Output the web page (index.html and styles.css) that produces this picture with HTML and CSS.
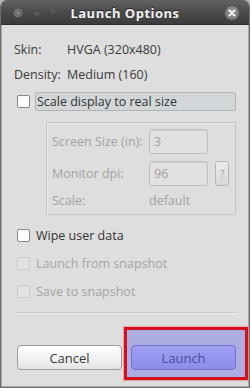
FILE: index.html
```html
<!DOCTYPE html>
<html>
<head>
<meta charset="utf-8">
<link rel="stylesheet" href="styles.css">
</head>
<body>
<div class="window">
  <div class="titlebar">
    <div class="tb-icons">
      <svg width="60" height="25" viewBox="0 0 60 25">
        <circle cx="18" cy="13" r="4" fill="#6a6a6a" stroke="#7a7a7a" stroke-width="1"/>
        <circle cx="18" cy="13" r="1.8" fill="#8a8a8a"/>
        <path d="M33 12 L41 12 L37 17 Z" fill="#5c5c5c"/>
        <path d="M53 8 L53 14 M50 11 L56 11 M51 9 L55 13 M55 9 L51 13" stroke="#5e5e5e" stroke-width="1"/>
      </svg>
    </div>
    <div class="title">Launch Options</div>
    <div class="close">
      <svg width="16" height="16" viewBox="0 0 16 16">
        <defs>
          <radialGradient id="cg" cx="50%" cy="40%" r="60%">
            <stop offset="0" stop-color="#9a9a9a"/>
            <stop offset="1" stop-color="#6e6e6e"/>
          </radialGradient>
        </defs>
        <circle cx="8" cy="8" r="7.5" fill="url(#cg)" stroke="#4a4a4a" stroke-width="0.6"/>
        <path d="M5.3 5.3 L10.7 10.7 M10.7 5.3 L5.3 10.7" stroke="#ffffff" stroke-width="1.8" stroke-linecap="round"/>
      </svg>
    </div>
  </div>
  <div class="content">
    <div class="info-row"><span class="info-label">Skin:</span><span>HVGA (320x480)</span></div>
    <div class="info-row"><span class="info-label">Density:</span><span>Medium (160)</span></div>
    <div class="check-row scale-row">
      <span class="box"></span>
      <span class="focus-label">Scale display to real size</span>
    </div>
    <div class="group">
      <div class="g-row g-row1">
        <span class="g-label">Screen Size (in):</span>
        <span class="field">3</span>
      </div>
      <div class="g-row g-row2">
        <span class="g-label">Monitor dpi:</span>
        <span class="field">96</span>
        <span class="qbtn">?</span>
      </div>
      <div class="g-row g-row3">
        <span class="g-label">Scale:</span>
        <span class="g-value">default</span>
      </div>
    </div>
    <div class="opts">
      <div class="check-row opt"><span class="box"></span><span class="opt-label">Wipe user data</span></div>
      <div class="check-row opt disabled"><span class="box"></span><span class="opt-label">Launch from snapshot</span></div>
      <div class="check-row opt disabled last"><span class="box"></span><span class="opt-label">Save to snapshot</span></div>
    </div>
    <div class="separator"></div>
    <div class="buttons">
      <button class="btn cancel">Cancel</button>
      <button class="btn launch">Launch</button>
    </div>
  </div>
  <div class="highlight"></div>
</div>
</body>
</html>
```

FILE: styles.css
```css
html, body {
  margin: 0;
  padding: 0;
}
body {
  background: #b4b4b4;
  width: 250px;
  height: 388px;
  overflow: hidden;
  font-family: "Open Sans", "Noto Sans", sans-serif;
  font-size: 12.5px;
  color: #3a3a3a;
}
.window {
  position: relative;
  width: 250px;
  height: 388px;
  box-sizing: border-box;
  background: #dedede;
  border: 1px solid #6c6c6c;
  border-top: none;
  border-radius: 7px 7px 0 0;
  overflow: hidden;
  box-shadow: inset 1px 0 0 #a8a8a8, inset -1px 0 0 #a8a8a8, inset 0 -1px 0 #a8a8a8;
}
.titlebar {
  height: 25px;
  background: linear-gradient(#626262, #4a4a4a 50%, #3c3c3c);
  border-bottom: 1px solid #2e2e2e;
  box-sizing: border-box;
  display: flex;
  align-items: center;
  position: relative;
}
.tb-icons {
  position: absolute;
  left: -1px;
  top: 0;
  height: 25px;
}
.title {
  flex: 1;
  text-align: center;
  color: #f2f2f2;
  font-weight: bold;
  font-size: 13px;
  letter-spacing: 0.5px;
  text-shadow: 0 -1px 0 #222;
  padding-top: 1px;
}
.close {
  position: absolute;
  right: 9px;
  top: 5px;
  width: 16px;
  height: 16px;
}
.content {
  display: flex;
  flex-direction: column;
  padding: 12px 13px 0 13px;
}
.info-row {
  height: 25px;
  display: flex;
  align-items: center;
}
.info-label {
  width: 53px;
}
.check-row {
  display: flex;
  align-items: center;
}
.box {
  width: 11px;
  height: 11px;
  margin-left: 3px;
  border: 1px solid #8a8a8a;
  border-radius: 2px;
  background: linear-gradient(#fafafa, #ffffff);
  flex: none;
}
.scale-row {
  margin-top: 5px;
  height: 19px;
}
.focus-label {
  margin-left: 5px;
  width: 201px;
  height: 19px;
  box-sizing: border-box;
  background: #d2d6d8;
  border: 1px solid #aeb4b8;
  border-radius: 2px;
  display: flex;
  align-items: center;
  padding-left: 1px;
  color: #333;
}
.group {
  margin: 11px 0 0 32px;
  width: 190px;
  height: 93px;
  box-sizing: border-box;
  border: 1px solid #c4c4c4;
  box-shadow: inset 1px 1px 0 #ececec;
  padding: 6px 0 0 5px;
  display: flex;
  flex-direction: column;
  color: #a2a2a2;
}
.g-row {
  display: flex;
  align-items: center;
}
.g-label {
  width: 97px;
  white-space: nowrap;
}
.g-row1, .g-row2 {
  height: 25px;
}
.g-row2 {
  margin-top: 7px;
}
.g-row3 {
  height: 24px;
  margin-top: 2px;
}
.field {
  width: 59px;
  height: 25px;
  box-sizing: border-box;
  border: 1px solid #bfbfbf;
  border-radius: 3px;
  background: #e0e0e0;
  box-shadow: inset 0 1px 0 #d2d2d2;
  display: flex;
  align-items: center;
  padding-left: 4px;
}
.qbtn {
  margin-left: 7px;
  width: 14px;
  height: 25px;
  box-sizing: border-box;
  border: 1px solid #b6b6b6;
  border-radius: 3px;
  background: linear-gradient(#ececec, #d8d8d8);
  display: flex;
  align-items: center;
  justify-content: center;
  font-size: 11px;
}
.opts {
  margin-top: 6px;
  display: flex;
  flex-direction: column;
}
.opt {
  height: 28px;
}
.opt.last {
  height: 29px;
}
.opt-label {
  margin-left: 6px;
  color: #333;
}
.disabled .opt-label {
  color: #a4a4a4;
}
.disabled .box {
  border-color: #c8c8c8;
  background: #e2e2e2;
}
.separator {
  margin: 6px 0 0 3px;
  width: 219px;
  height: 1px;
  background: #c8c8c8;
  box-shadow: 0 1px 0 #ececec;
}
.buttons {
  display: flex;
  gap: 9px;
  margin-top: 32px;
  padding-left: 3px;
}
.btn {
  width: 105px;
  height: 25px;
  box-sizing: border-box;
  border-radius: 4px;
  font-family: "Open Sans", "Noto Sans", sans-serif;
  font-size: 13px;
  padding: 0;
}
.cancel {
  border: 1px solid #9c9c9c;
  background: linear-gradient(#ffffff, #f0f0f0 60%, #e4e4e4);
  color: #3a3a3a;
}
.launch {
  border: 1px solid #7474b4;
  background: linear-gradient(#c8c8fc, #b2b2f2 60%, #a6a6e8);
  color: #2e2e62;
}
.highlight {
  position: absolute;
  left: 123px;
  top: 327px;
  width: 124px;
  height: 53px;
  box-sizing: border-box;
  border: 3px solid #d4101c;
  background: rgba(110, 110, 230, 0.45);
  box-shadow: 0 0 1px 1px rgba(230, 120, 130, 0.5);
}
```
